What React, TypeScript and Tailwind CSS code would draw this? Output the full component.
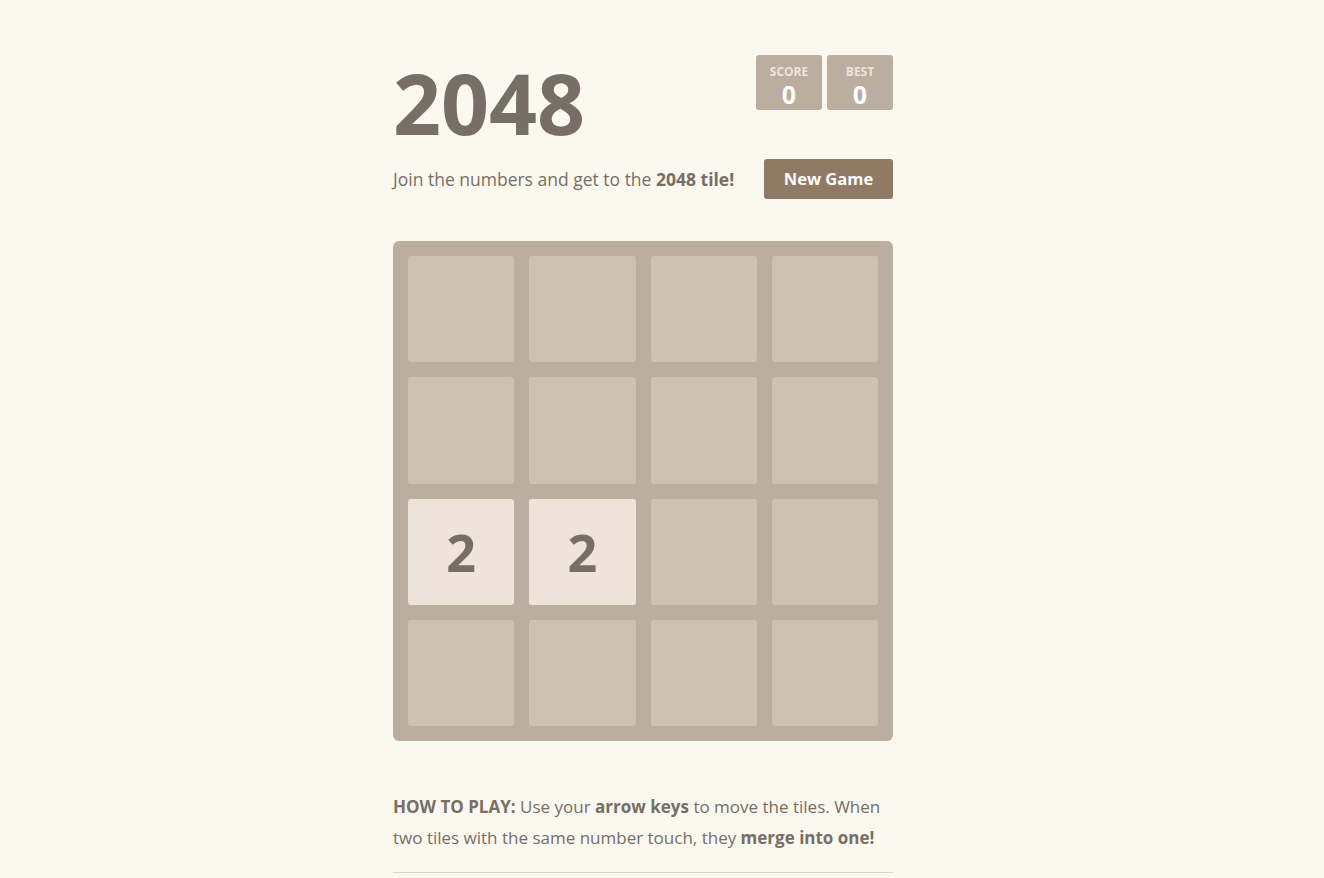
const BOARD: number[] = [0, 0, 0, 0, 0, 0, 0, 0, 2, 2, 0, 0, 0, 0, 0, 0];

function ScoreBox({ label, value }: { label: string; value: number }) {
  return (
    <div className="flex h-[55px] w-[66px] flex-col items-center rounded-[3px] bg-[#bbada0] pt-[10px]">
      <span className="text-[12px] font-bold uppercase leading-[14px] text-[#eee4da]">{label}</span>
      <span className="mt-[1px] text-[25px] font-bold leading-[28px] text-white">{value}</span>
    </div>
  );
}

export default function App() {
  return (
    <div className="min-h-screen bg-[#faf8ef] font-['Open_Sans',sans-serif] text-[#776e65]">
      <div className="ml-[393px] w-[500px] pt-[55px]">
        <div className="flex items-start justify-between">
          <h1 className="mt-[8px] text-[84px] font-bold leading-[80px]">2048</h1>
          <div className="flex gap-[5px]">
            <ScoreBox label="Score" value={0} />
            <ScoreBox label="Best" value={0} />
          </div>
        </div>

        <div className="mt-[16px] flex items-center justify-between">
          <p className="text-[17.5px] leading-[24px]">
            Join the numbers and get to the <strong>2048 tile!</strong>
          </p>
          <button className="h-[40px] w-[129px] rounded-[3px] bg-[#8f7a66] text-[16.5px] font-bold text-white">
            New Game
          </button>
        </div>

        <div className="mt-[42px] grid h-[500px] w-[500px] grid-cols-4 grid-rows-4 gap-[15px] rounded-[6px] bg-[#bbada0] p-[15px]">
          {BOARD.map((v, i) =>
            v ? (
              <div
                key={i}
                className="flex items-center justify-center rounded-[3px] bg-[#eee4da] text-[52px] font-bold text-[#776e65]"
              >
                {v}
              </div>
            ) : (
              <div key={i} className="rounded-[3px] bg-[#cdc1b4]" />
            )
          )}
        </div>

        <p className="mt-[50px] text-[17px] leading-[31px]">
          <strong>HOW TO PLAY:</strong> Use your <strong>arrow keys</strong> to move the tiles. When two
          tiles with the same number touch, they <strong>merge into one!</strong>
        </p>
        <hr className="mt-[19px] border-t border-[#d8d4d0]" />
      </div>
    </div>
  );
}
